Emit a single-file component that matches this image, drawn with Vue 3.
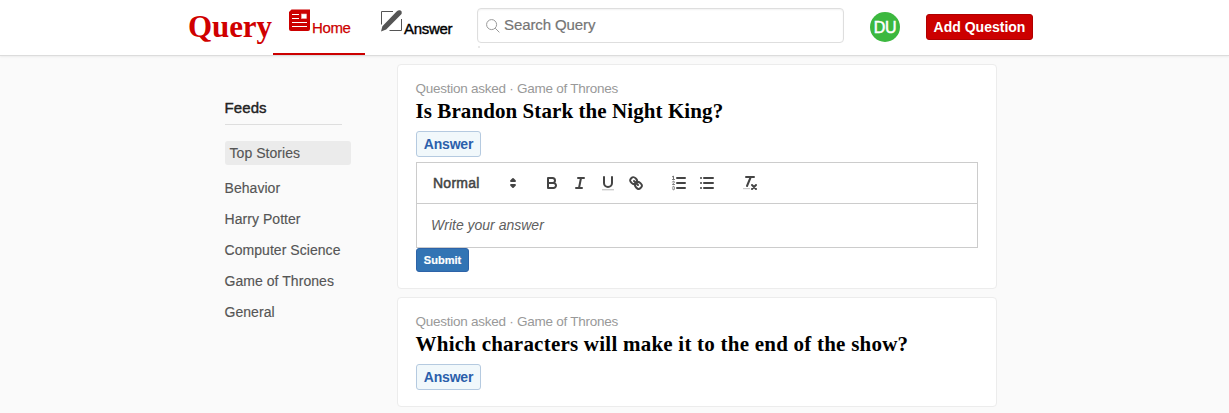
<script setup>
const feeds = ['Behavior', 'Harry Potter', 'Computer Science', 'Game of Thrones', 'General']
const questions = [
  { title: 'Is Brandon Stark the Night King?', topic: 'Game of Thrones', open: true, cls: 'q1' },
  { title: 'Which characters will make it to the end of the show?', topic: 'Game of Thrones', open: false, cls: 'q2' },
]
</script>

<template>
  <div class="page">
    <header class="header">
      <div class="logo"><span>Query</span></div>
      <nav class="nav">
        <a class="tab active">
          <svg width="22" height="23" viewBox="0 0 22 23">
            <path d="M2.5 .5H21V20Q21 22 19 22H2Q0 22 0 20V3Z" fill="#c00" />
            <path d="M3 5.5H10M3 9.5H10M3 13.5H18M3 17.5H18" stroke="#fff" stroke-width="1.2" />
            <rect x="12.5" y="5" width="5" height="4.5" fill="#fff" stroke="#f4b4b4" stroke-width=".6" />
          </svg>
          <span class="home">Home</span>
        </a>
        <a class="tab">
          <svg width="22" height="23" viewBox="0 0 22 23">
            <path d="M12 2.5H.5V15.5M20.5 10V21.5H8.5" fill="none" stroke="#555" stroke-width="1" />
            <path d="M0 22.5L1.4 17.2L15.6 2.4Q17.4 .8 19.2 1.3Q21.4 2.2 20.7 4.4Q20.4 5.1 19.8 5.7L5.2 20.6Z" fill="#555" />
          </svg>
          <span class="ans">Answer</span>
        </a>
      </nav>
      <div class="search">
        <svg width="14" height="14" viewBox="0 0 14 14" fill="none" stroke="#999">
          <circle cx="5.6" cy="5.6" r="5" /><path d="M9.2 9.2L13.4 13.4" />
        </svg>
        <span>Search Query</span>
        <b class="results"></b>
      </div>
      <div class="avatar"><span>DU</span></div>
      <button class="add"><span>Add Question</span></button>
    </header>

    <div class="content">
      <aside class="sidebar">
        <h2><span>Feeds</span></h2>
        <div class="top"><span>Top Stories</span></div>
        <ul>
          <li v-for="f in feeds" :key="f"><span>{{ f }}</span></li>
        </ul>
      </aside>

      <main>
        <article v-for="q in questions" :key="q.title" class="card">
          <p class="meta"><span>Question asked · {{ q.topic }}</span></p>
          <h3><span :class="q.cls">{{ q.title }}</span></h3>
          <button class="answer"><span>Answer</span></button>
          <div v-if="q.open" class="editor">
            <div class="toolbar">
              <div class="picker">
                <span>Normal</span>
                <svg viewBox="0 0 18 18"><path class="both" d="M7 11L9 13L11 11ZM7 7L9 5L11 7Z" /></svg>
              </div>
              <div class="group">
                <i><svg viewBox="0 0 18 18"><path class="s" d="M5 4H9.5A2.5 2.5 0 0 1 12 6.5A2.5 2.5 0 0 1 9.5 9H5ZM5 9H10.5A2.5 2.5 0 0 1 13 11.5A2.5 2.5 0 0 1 10.5 14H5Z" /></svg></i>
                <i><svg viewBox="0 0 18 18"><path class="s" d="M7 4H13M5 14H11M8 14L10 4" /></svg></i>
                <i><svg viewBox="0 0 18 18"><path class="s" d="M5 3V9A4.012 4.012 0 0 0 9 13A4.012 4.012 0 0 0 13 9V3" /><rect x="3" y="15" width="12" height="1.4" fill="#ccc" /></svg></i>
                <i><svg viewBox="0 0 18 18"><path class="s" d="M7 7L11 11M8.9 4.577a3.476 3.476 0 0 1 .36 4.679A3.476 3.476 0 0 1 4.577 8.9C3.185 7.5 2.035 6.4 4.217 4.217S7.5 3.185 8.9 4.577ZM13.423 9.1a3.476 3.476 0 0 0-4.679-.36 3.476 3.476 0 0 0 .36 4.679c1.392 1.392 2.5 2.542 4.679.36S14.815 10.488 13.423 9.1Z" /></svg></i>
              </div>
              <div class="group">
                <i><svg viewBox="0 0 18 18"><path class="s" d="M7 4H15M7 9H15M7 14H15" /><path class="thin" d="M2.5 5.5H4.5" /><path fill="#777" d="M3.5 6A.5.5 0 0 1 3 5.5V3.085L2.724 3.223A.5.5 0 0 1 2.053 3C1.954 2.641 2.1 2.4 2.276 2.329L3.276 1.829A.5.5 0 0 1 4 2.276V5.5A.5.5 0 0 1 3.5 6Z" /><path class="thin" d="M4.5 10.5H2.5C2.5 9.6 4.426 9.055 4.426 8.156A.981.981 0 0 0 2.5 7.967M2.5 14.846A.959.959 0 0 0 4.5 14.7A.751.751 0 0 0 3.75 14A.688.688 0 0 0 4.426 13.279A.977.977 0 0 0 2.5 13.15" /></svg></i>
                <i><svg viewBox="0 0 18 18"><path class="s" d="M6 4H15M6 9H15M6 14H15M3 4H3.01M3 9H3.01M3 14H3.01" /></svg></i>
              </div>
              <div class="group">
                <i><svg viewBox="0 0 18 18"><path class="s" d="M5 3H13M6 12L9.35 4M11 11L15 15M15 11L11 15" /><rect x="2" y="14" width="7" height="1.2" fill="#ccc" /></svg></i>
              </div>
            </div>
            <div class="area"><span>Write your answer</span></div>
          </div>
          <button v-if="q.open" class="submit"><span>Submit</span></button>
        </article>
      </main>
    </div>
  </div>
</template>

<style>
body { margin: 0; background: #fafafa; overflow: hidden; }
</style>

<style scoped>
* { box-sizing: border-box; }
.page { height: 413px; overflow: hidden; background: #fafafa; font-family: "Liberation Sans", Arial, sans-serif; color: #555; }
span { white-space: nowrap; }
button { font-family: inherit; margin: 0; padding: 0; display: flex; align-items: center; justify-content: center; }
.header { height: 56px; background: #fff; border-bottom: 1px solid #dcdcdc; box-shadow: 0 1px 2px rgba(0,0,0,.06); display: flex; align-items: flex-start; padding-left: 188px; position: relative; }
.logo { width: 85px; font: bold 31px/53px "Liberation Serif", serif; color: #d00000; letter-spacing: -.1px; }
.nav { display: flex; height: 55px; }
.tab { width: 92px; height: 55px; padding: 9px 0 0 16px; display: flex; gap: 1px; font-size: 15px; color: #000; }
.tab svg { flex: none; }
.tab span { line-height: 18px; margin-top: 10px; -webkit-text-stroke: .25px; letter-spacing: -.35px; }
.tab .ans { margin-top: 11px; letter-spacing: -.3px; -webkit-text-stroke: .4px; }
.active { color: #c00; border-bottom: 2px solid #c00; }
.search { position: relative; margin: 8px 0 0 20px; width: 367px; height: 35px; border: 1px solid #dedede; border-radius: 4px; display: flex; align-items: center; padding-left: 8px; gap: 4px; font-size: 15px; color: #757575; box-shadow: inset 0 1px 2px #f2f2f2; }
.search span { -webkit-text-stroke: .2px; margin-top: -2px; letter-spacing: -.1px; }
.results { position: absolute; left: 0; top: 37px; width: 2px; height: 2px; background: #e8e8e8; }
.avatar { width: 30px; height: 30px; margin: 12px 0 0 26px; border-radius: 50%; background: #3cb83f; color: #fff; font-size: 16px; display: flex; align-items: center; justify-content: center; -webkit-text-stroke: .5px; letter-spacing: -.4px; }
.avatar span { margin-top: 1px; }
.add { margin: 14px 0 0 26px; width: 107px; height: 26px; background: #c00; border: 1px solid #b00000; border-radius: 3px; color: #fff; font-size: 14px; font-weight: bold; }
.content { display: flex; padding-top: 8px; }
.sidebar { width: 397px; padding: 34px 0 0 224.5px; font-size: 14px; letter-spacing: .05px; }
.sidebar h2 { margin: 0 0 16px; width: 117px; height: 27px; border-bottom: 1px solid #dedede; font-size: 15px; letter-spacing: .1px; line-height: 20px; font-weight: normal; color: #222; -webkit-text-stroke: .4px; }
.top { width: 126px; height: 24px; border-radius: 3px; background: #ebebeb; line-height: 24px; padding-left: 5px; }
ul { list-style: none; margin: 8px 0 0; padding: 0; }
li { height: 31px; line-height: 31px; }
.sidebar .top span, li span { -webkit-text-stroke: .15px; }
.card { width: 600px; border: 1px solid #ececec; border-radius: 4px; background: #fff; padding: 15px 18px 16px; margin-bottom: 8px; }
.meta { margin: 0 0 0 -.5px; font-size: 13.5px; line-height: 18px; height: 18px; color: #999; letter-spacing: -.25px; }
h3 { margin: 0 0 7px -.5px; font: bold 21px/27px "Liberation Serif", serif; height: 26px; color: #000; }
.q1 { letter-spacing: .08px; }
.q2 { letter-spacing: .23px; }
.answer { width: 65px; height: 26px; border: 1px solid #b5cae0; border-radius: 3px; background: #f1f8fb; color: #2b5fab; font-size: 14px; font-weight: bold; letter-spacing: -.2px; }
.editor { margin-top: 5px; width: 562px; border: 1px solid #ccc; color: #444; }
.toolbar { height: 41px; border-bottom: 1px solid #ccc; padding: 8px; display: flex; gap: 15px; }
.picker { width: 98px; height: 24px; padding-left: 8px; display: flex; align-items: center; justify-content: space-between; font-size: 14px; -webkit-text-stroke: .5px; letter-spacing: .25px; }
.picker svg { width: 18px; height: 18px; margin-right: 1px; }
.both { fill: #444; stroke: #444; stroke-width: 1.8; stroke-linejoin: round; }
.group { display: flex; }
.group i { width: 28px; height: 24px; padding: 3px 5px; display: block; }
.group svg { width: 18px; height: 18px; display: block; }
.s { fill: none; stroke: #444; stroke-width: 2; stroke-linecap: round; stroke-linejoin: round; }
.thin { fill: none; stroke: #777; stroke-width: 1; stroke-linecap: round; }
.area { height: 43px; padding-left: 14px; line-height: 42px; font-size: 14px; font-style: italic; color: #606060; }
.submit { width: 53px; height: 24px; border: 1px solid #2d63a8; border-radius: 3px; background: #3274b4; color: #fff; font-size: 11px; font-weight: bold; -webkit-text-stroke: .2px; }
</style>
